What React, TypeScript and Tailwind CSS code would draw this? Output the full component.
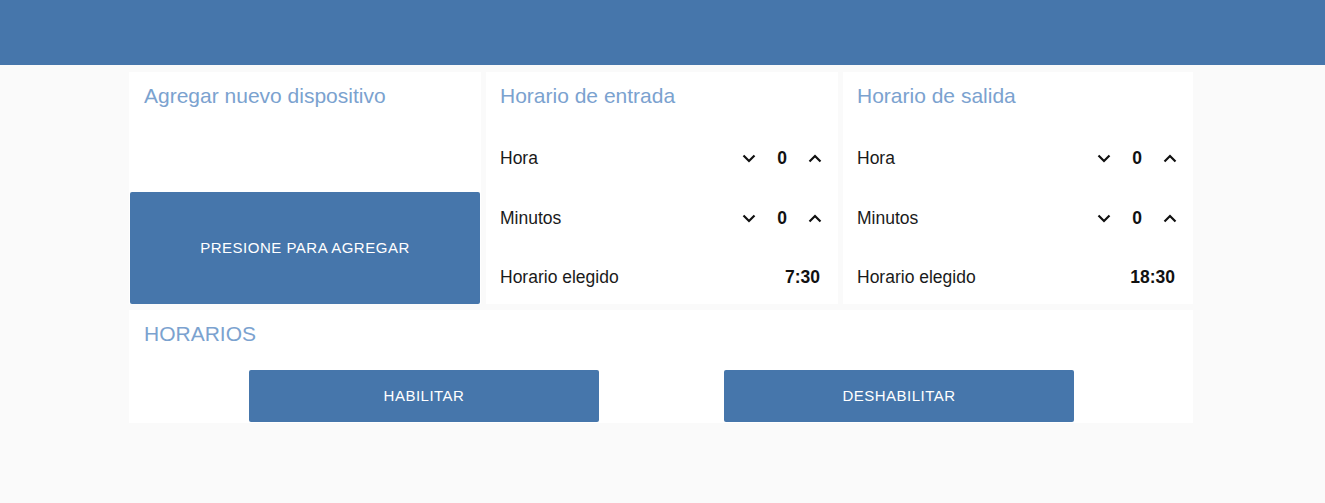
import React from "react";

const Chevron = ({ up }: { up?: boolean }) => (
  <svg width="14" height="9" viewBox="0 0 14 9" className="block">
    <path
      d={up ? "M1.5 7.5 L7 2 L12.5 7.5" : "M1.5 1.5 L7 7 L12.5 1.5"}
      fill="none"
      stroke="#111"
      strokeWidth="2.2"
    />
  </svg>
);

const Stepper = ({ label, value }: { label: string; value: number }) => (
  <div className="flex items-center justify-between h-[60px]">
    <span className="text-[17.5px] text-[#1a1a1a]">{label}</span>
    <div className="flex items-center">
      <Chevron />
      <span className="w-[52px] text-center text-[17.5px] font-bold text-[#111]">{value}</span>
      <Chevron up />
    </div>
  </div>
);

const TimeCard = ({ title, time }: { title: string; time: string }) => (
  <div className="bg-white h-[232px] pl-[14px] pr-[16px]">
    <div className="h-[48px] flex items-center text-[21px] text-[#7ba2cf]">{title}</div>
    <div className="h-[8px]" />
    <Stepper label="Hora" value={0} />
    <Stepper label="Minutos" value={0} />
    <div className="flex items-center justify-between h-[59px] pr-[2px]">
      <span className="text-[17.5px] text-[#1a1a1a]">Horario elegido</span>
      <span className="text-[17.5px] font-bold text-[#111]">{time}</span>
    </div>
  </div>
);

export default function App() {
  return (
    <div className="min-h-[503px] bg-[#fafafa] font-['Liberation_Sans',Arial,sans-serif]">
      <div className="h-[65px] bg-[#4676ab]" />
      <div className="w-[1064px] ml-[129px] pt-[7px] flex flex-col gap-[6px]">
        <div className="grid grid-cols-[352px_352px_1fr] gap-x-[5px] gap-y-0">
          <div className="bg-white h-[232px] flex flex-col">
            <div className="h-[48px] pl-[15px] flex items-center text-[21px] text-[#7ba2cf]">
              Agregar nuevo dispositivo
            </div>
            <div className="flex-1" />
            <button className="mx-[1px] h-[112px] bg-[#4676ab] rounded-[2px] text-white text-[15px] tracking-[0.5px]">
              PRESIONE PARA AGREGAR
            </button>
          </div>
          <TimeCard title="Horario de entrada" time="7:30" />
          <TimeCard title="Horario de salida" time="18:30" />
        </div>
        <div className="bg-white h-[113px] flex flex-col">
          <div className="h-[48px] pl-[15px] flex items-center text-[21px] text-[#7ba2cf]">
            HORARIOS
          </div>
          <div className="flex gap-[125px] pl-[120px] mt-[12px]">
            <button className="w-[350px] h-[52px] bg-[#4676ab] rounded-[2px] text-white text-[15px] tracking-[0.5px]">
              HABILITAR
            </button>
            <button className="w-[350px] h-[52px] bg-[#4676ab] rounded-[2px] text-white text-[15px] tracking-[0.5px]">
              DESHABILITAR
            </button>
          </div>
        </div>
      </div>
    </div>
  );
}
